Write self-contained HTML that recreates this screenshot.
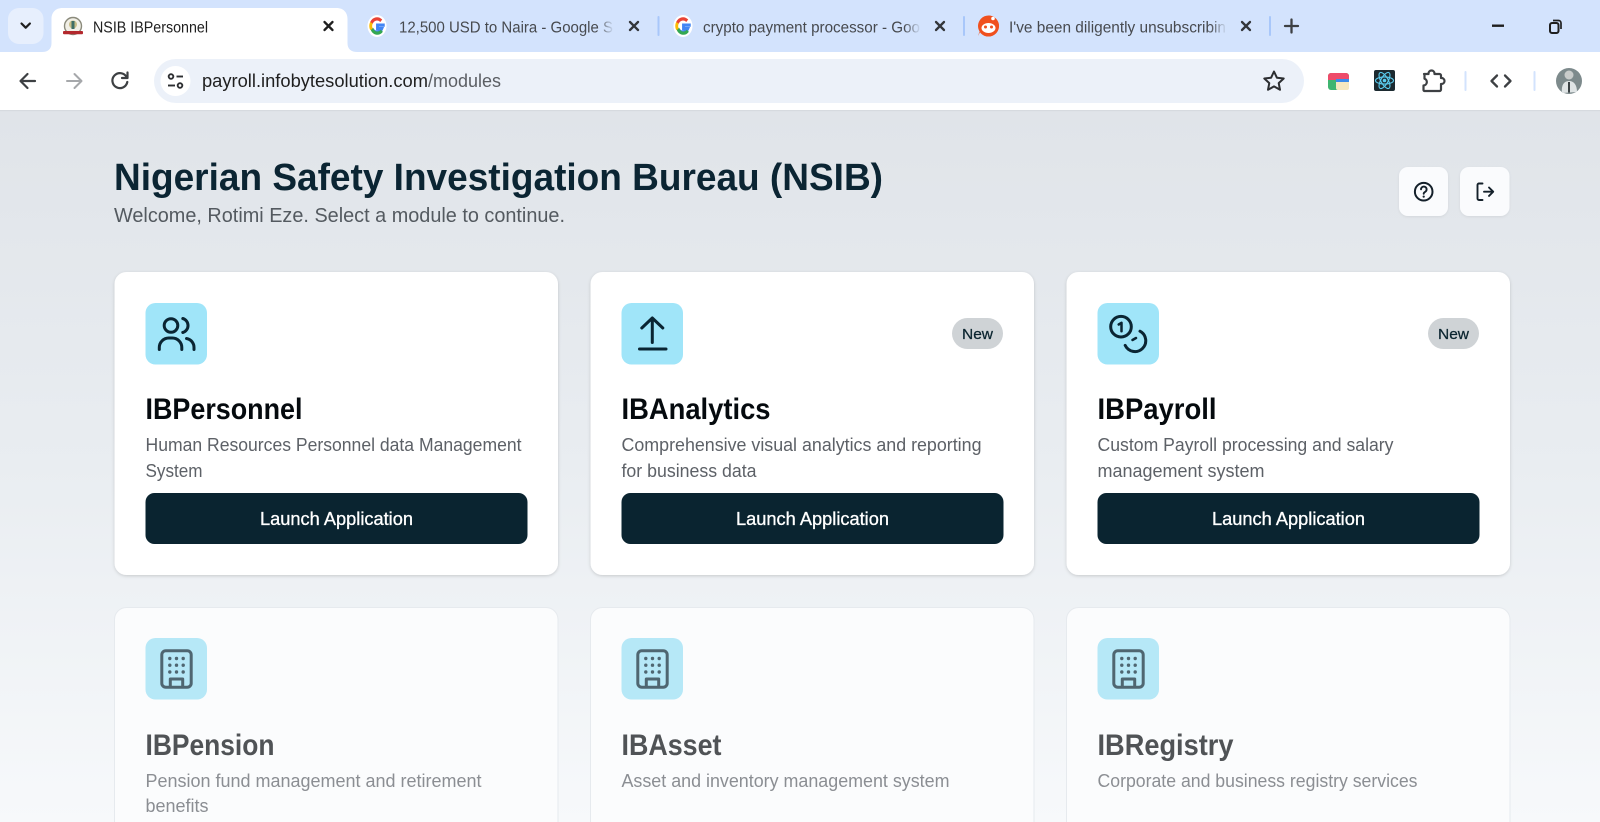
<!DOCTYPE html>
<html lang="en">
<head>
<meta charset="utf-8">
<title>NSIB IBPersonnel</title>
<style>
html,body{margin:0;padding:0;width:1600px;height:822px;overflow:hidden;background:#fff}
svg{display:block;overflow:hidden}
text{font-family:"Liberation Sans",sans-serif}
.tab{font-size:15.5px;fill:#474a4f}
.h3{font-size:30px;font-weight:700;fill:#050a0e}
.d{font-size:18px;fill:#5d6167}
.b{font-size:18px;fill:#fff;stroke:#fff;stroke-width:.3}
.h3o{font-size:30px;font-weight:700;fill:#505356}
.do{font-size:18px;fill:#8b8e93}
.new{font-size:14.5px;fill:#0b2530;stroke:#0b2530;stroke-width:.25}
.ic{fill:none;stroke:#0a2533;stroke-width:3;stroke-linecap:round;stroke-linejoin:round}
.bi{fill:none;stroke:#4f6671;stroke-width:3;stroke-linejoin:round}
.x{fill:none;stroke:#33363a;stroke-width:2.300;stroke-linecap:round}
</style>
</head>
<body>
<svg width="1600" height="822" viewBox="0 0 1600 822" xmlns="http://www.w3.org/2000/svg">
<defs>
<linearGradient id="bg" x1="0" y1="0" x2="0" y2="1"><stop offset="0" stop-color="#e0e4e9"/><stop offset=".5" stop-color="#e9edf1"/><stop offset="1" stop-color="#f7f9fb"/></linearGradient>
<linearGradient id="fade" x1="0" y1="0" x2="1" y2="0"><stop offset="0" stop-color="#d3e3fd" stop-opacity="0"/><stop offset="1" stop-color="#d3e3fd"/></linearGradient>
<filter id="sh" x="-5%" y="-5%" width="110%" height="112%"><feDropShadow dx="0" dy="1" stdDeviation="1.6" flood-color="#000" flood-opacity=".17"/></filter>
<filter id="sh2" x="-5%" y="-5%" width="110%" height="112%"><feDropShadow dx="0" dy="1" stdDeviation="1.2" flood-color="#000" flood-opacity=".07"/></filter>
<g id="G">
  <ellipse rx="9.500" ry="11" fill="#fff"/>
  <g transform="scale(1.250 1.450)">
  <path d="M6.200-.6H.4v2.400h3.400A4.300 4.300 0 0 1-3.900 1.900" fill="none" stroke="#4285f4" stroke-width="2.300"/>
  <path d="M-4.200 1.500A4.600 4.600 0 0 0 3.800 3.200" fill="none" stroke="#34a853" stroke-width="2.300"/>
  <path d="M-4.400 2.400A5 5 0 0 1-4.400-2.400" fill="none" stroke="#fbbc05" stroke-width="2.300"/>
  <path d="M-4.400-2.200A5 5 0 0 1 3.400-3.600" fill="none" stroke="#ea4335" stroke-width="2.300"/>
  </g>
</g>
<g id="bld">
  <rect x="161.800" y="650.800" width="29.400" height="36.400" rx="4" class="bi"/>
  <g fill="#4f6671"><circle cx="169.800" cy="658.500" r="1.700"/><circle cx="176.500" cy="658.500" r="1.700"/><circle cx="183.200" cy="658.500" r="1.700"/><circle cx="169.800" cy="665.200" r="1.700"/><circle cx="176.500" cy="665.200" r="1.700"/><circle cx="183.200" cy="665.200" r="1.700"/><circle cx="169.800" cy="672" r="1.700"/><circle cx="176.500" cy="672" r="1.700"/><circle cx="183.200" cy="672" r="1.700"/></g>
  <path d="M170.300 687V679H182.700V687" class="bi"/>
</g>
<g id="c2">
  <path d="M0 822V619.500a12 12 0 0 1 12-12H431.500a12 12 0 0 1 12 12V822z" fill="#fbfcfd"/>
  <path d="M0 822V619.500a12 12 0 0 1 12-12H431.500a12 12 0 0 1 12 12V822" fill="none" stroke="#e6eaee" stroke-width="1"/>
</g>
</defs>

<!-- page -->
<rect x="0" y="111" width="1600" height="711" fill="url(#bg)"/>

<!-- tab strip -->
<rect width="1600" height="52" fill="#d3e3fd"/>
<rect x="8" y="8" width="35.500" height="36" rx="11" fill="#e7effd"/>
<path d="M21.500 23.500l4.200 4.200 4.200-4.200" fill="none" stroke="#1f1f1f" stroke-width="2.200" stroke-linecap="round" stroke-linejoin="round"/>
<path d="M42 52c6 0 9.500-3 9.500-9V19c0-6.500 4-11 11-11h274c7 0 11 4.500 11 11v24c0 6 3.500 9 10 9z" fill="#fff"/>

<!-- NSIB favicon -->
<g>
  <circle cx="73" cy="26" r="8.500" fill="#f1efe6" stroke="#8b8b7c" stroke-width="1.400"/>
  <circle cx="73" cy="24.500" r="4" fill="#c9bd88"/>
  <rect x="71.500" y="21" width="3" height="8" fill="#3f6e66"/>
  <rect x="63" y="31" width="20" height="3.200" rx="1" fill="#b3282d"/>
</g>
<text x="93" y="32.500" class="tab" style="fill:#1f1f1f" textLength="115" lengthAdjust="spacingAndGlyphs">NSIB IBPersonnel</text>
<path d="M324.500 22l8 8m0-8l-8 8" class="x" style="stroke:#1f1f1f"/>

<use href="#G" x="377" y="26"/>
<text x="399" y="32.500" class="tab" textLength="214" lengthAdjust="spacingAndGlyphs">12,500 USD to Naira - Google S</text>
<rect x="598" y="14" width="16" height="26" fill="url(#fade)"/>
<path d="M630 22l8 8m0-8l-8 8" class="x"/>
<rect x="657.500" y="16" width="2" height="20" rx="1" fill="#a8c7fa"/>

<use href="#G" x="683" y="26"/>
<text x="703" y="32.500" class="tab" textLength="217" lengthAdjust="spacingAndGlyphs">crypto payment processor - Goo</text>
<rect x="904" y="14" width="17" height="26" fill="url(#fade)"/>
<path d="M936 22l8 8m0-8l-8 8" class="x"/>
<rect x="963" y="16" width="2" height="20" rx="1" fill="#a8c7fa"/>

<!-- reddit -->
<g>
  <path d="M988.500 15.500a10.500 10.500 0 1 1-9 16l-1.500 4.500z" fill="#f0501e"/>
  <circle cx="988.500" cy="26" r="10.500" fill="#f0501e"/>
  <ellipse cx="988.500" cy="28" rx="7" ry="5" fill="#fff"/>
  <circle cx="985.500" cy="27" r="1.500" fill="#f0501e"/><circle cx="991.500" cy="27" r="1.500" fill="#f0501e"/>
  <circle cx="993" cy="18.500" r="1.800" fill="#fff"/>
</g>
<text x="1009" y="32.500" class="tab" textLength="217" lengthAdjust="spacingAndGlyphs">I've been diligently unsubscribin</text>
<rect x="1210" y="14" width="17" height="26" fill="url(#fade)"/>
<path d="M1242 22l8 8m0-8l-8 8" class="x"/>
<rect x="1269" y="16" width="2" height="20" rx="1" fill="#a8c7fa"/>
<path d="M1291.500 19.500v13m-6.500-6.500h13" fill="none" stroke="#3d4043" stroke-width="2.300" stroke-linecap="round"/>
<rect x="1492" y="24.500" width="12" height="2.400" fill="#1f1f1f"/>
<rect x="1550" y="23" width="8.500" height="10" rx="2" fill="none" stroke="#1f1f1f" stroke-width="2"/>
<path d="M1553 20.500h5.500a2.500 2.500 0 0 1 2.500 2.500v6" fill="none" stroke="#1f1f1f" stroke-width="1.700"/>

<!-- toolbar -->
<rect x="0" y="52" width="1600" height="58.500" fill="#fff"/>
<rect x="0" y="110" width="1600" height="1.200" fill="#d6dadf"/>
<path d="M35 81H21m6.500-7l-7 7 7 7" fill="none" stroke="#3d4043" stroke-width="2.200" stroke-linecap="round" stroke-linejoin="round"/>
<path d="M67 81h14m-6.500-7l7 7-7 7" fill="none" stroke="#a6a8ab" stroke-width="2" stroke-linecap="round" stroke-linejoin="round"/>
<path d="M126.500 77a7.500 7.500 0 1 0 .8 5" fill="none" stroke="#3d4043" stroke-width="2.200" stroke-linecap="round"/>
<path d="M127.500 72.500v5.500h-5.500" fill="none" stroke="#3d4043" stroke-width="2.200" stroke-linecap="round" stroke-linejoin="round"/>
<rect x="154" y="59" width="1150" height="44" rx="22" fill="#ecf1f9"/>
<circle cx="175.500" cy="81" r="15" fill="#fff"/>
<g fill="none" stroke="#2c2e31" stroke-width="1.900"><circle cx="171" cy="76.500" r="2.300"/><path d="M176.500 76.500h6.500"/><circle cx="180" cy="85.500" r="2.300"/><path d="M168 85.500h7"/></g>
<text x="202" y="87" font-size="18" fill="#1f1f1f" textLength="226" lengthAdjust="spacingAndGlyphs">payroll.infobytesolution.com</text>
<text x="428" y="87" font-size="18" fill="#5b5e63" textLength="73" lengthAdjust="spacingAndGlyphs">/modules</text>
<path d="M1274 71.500l2.900 6.200 6.800.8-5 4.600 1.300 6.700-6-3.400-6 3.400 1.300-6.700-5-4.600 6.800-.8z" fill="none" stroke="#2c2e31" stroke-width="2" stroke-linejoin="round"/>

<!-- extension icons -->
<g>
  <rect x="1328" y="73" width="21" height="17" rx="3" fill="#3fb56f"/>
  <path d="M1328 80v-4a3 3 0 0 1 3-3h15a3 3 0 0 1 3 3v4z" fill="#ee4b6a"/>
  <rect x="1336" y="80" width="13" height="10" rx="2" fill="#f5e8c0"/>
  <rect x="1336" y="79" width="13" height="3" fill="#3b8bea"/>
</g>
<g>
  <rect x="1374" y="70" width="21" height="21" rx="2" fill="#1c2a30"/>
  <g fill="none" stroke="#5bcdf0" stroke-width="1.100"><ellipse cx="1384.500" cy="80.500" rx="9" ry="3.600"/><ellipse cx="1384.500" cy="80.500" rx="9" ry="3.600" transform="rotate(60 1384.500 80.500)"/><ellipse cx="1384.500" cy="80.500" rx="9" ry="3.600" transform="rotate(120 1384.500 80.500)"/></g>
  <circle cx="1384.500" cy="80.500" r="1.800" fill="#5bcdf0"/>
</g>
<path d="M1424 74h4.500v-.5a3 3 0 0 1 6 0v.5h5a1.500 1.500 0 0 1 1.500 1.500V78h.5a3 3 0 0 1 0 6h-.5v5.500a1.500 1.500 0 0 1-1.500 1.500h-15a1 1 0 0 1-1-1v-4.500a3.500 3.500 0 0 0 1-6.800V75a1 1 0 0 1 .5-1z" fill="none" stroke="#3d4043" stroke-width="2.200" stroke-linejoin="round"/>
<rect x="1464.500" y="71" width="2" height="20" rx="1" fill="#d3e3fd"/>
<path d="M1497 75.500l-5.500 5.500 5.500 5.500m8-11l5.500 5.500-5.500 5.500" fill="none" stroke="#3d4043" stroke-width="2.300" stroke-linecap="round" stroke-linejoin="round"/>
<rect x="1533.500" y="71" width="2" height="20" rx="1" fill="#d3e3fd"/>
<circle cx="1569" cy="81" r="13" fill="#7d8a8c"/>
<path d="M1562 93c-1-8 2-12 7-12s8 4 8 11z" fill="#dfe4e5"/>
<circle cx="1569" cy="75" r="4.500" fill="#c9cccb"/>
<rect x="1568" y="82" width="2" height="10.500" fill="#3a4144"/>

<!-- header -->
<text x="114" y="190" font-size="38" font-weight="700" fill="#0b2533" textLength="769" lengthAdjust="spacingAndGlyphs">Nigerian Safety Investigation Bureau (NSIB)</text>
<text x="114" y="222" font-size="20" fill="#545a60" textLength="451" lengthAdjust="spacingAndGlyphs">Welcome, Rotimi Eze. Select a module to continue.</text>

<rect x="1399" y="167" width="49" height="49" rx="9" fill="#fafbfd" filter="url(#sh2)"/>
<rect x="1460" y="167" width="49.500" height="49" rx="9" fill="#fafbfd" filter="url(#sh2)"/>
<circle cx="1423.700" cy="191.700" r="8.800" fill="none" stroke="#14202a" stroke-width="2"/>
<path d="M1421 189.300a2.800 2.800 0 1 1 4.200 2.500c-1 .6-1.500 1.100-1.500 2" fill="none" stroke="#14202a" stroke-width="1.900" stroke-linecap="round"/>
<circle cx="1423.700" cy="196.600" r="1.100" fill="#14202a"/>
<path d="M1482.500 183.500h-3.500a1.500 1.500 0 0 0-1.500 1.500v13.500a1.500 1.500 0 0 0 1.500 1.500h3.500M1484 191.700h9m-4-4.200l4.200 4.200-4.200 4.200" fill="none" stroke="#14202a" stroke-width="1.900" stroke-linecap="round" stroke-linejoin="round"/>

<!-- row 1 cards -->
<rect x="114.500" y="272" width="443.500" height="303" rx="12" fill="#fff" filter="url(#sh)"/>
<rect x="590.500" y="272" width="443.500" height="303" rx="12" fill="#fff" filter="url(#sh)"/>
<rect x="1066.500" y="272" width="443.500" height="303" rx="12" fill="#fff" filter="url(#sh)"/>

<rect x="145.500" y="303" width="61.500" height="61.500" rx="10" fill="#a0e5f9"/>
<rect x="621.500" y="303" width="61.500" height="61.500" rx="10" fill="#a0e5f9"/>
<rect x="1097.500" y="303" width="61.500" height="61.500" rx="10" fill="#a0e5f9"/>

<circle cx="171" cy="325.500" r="6.800" class="ic"/>
<path d="M182.800 318.500a7.300 7.300 0 0 1 0 14" class="ic"/>
<path d="M159.300 349.500v-2a9.500 9.500 0 0 1 9.500-9.500h3.500a9.500 9.500 0 0 1 9.500 9.500v2" class="ic"/>
<path d="M186.500 338.500a9 9 0 0 1 7.500 9v2" class="ic"/>

<path d="M652.300 342.500V318.500m-10.500 9.500l10.500-10 10.500 10M639.500 349h26.500" class="ic"/>

<circle cx="1121" cy="326.700" r="10.300" class="ic"/>
<path d="M1118.700 324.500l2.800-1.700v8.500" class="ic" style="stroke-width:2.500"/>
<path d="M1140 331.200a10.800 10.800 0 1 1-14.800 14.200" class="ic"/>
<path d="M1132.500 340l3.500-2" class="ic" style="stroke-width:2.500"/>

<rect x="952" y="318" width="51" height="31" rx="15.500" fill="#cfd3d6"/>
<text x="962" y="339" class="new" textLength="31" lengthAdjust="spacingAndGlyphs">New</text>
<rect x="1428" y="318" width="51" height="31" rx="15.500" fill="#cfd3d6"/>
<text x="1438" y="339" class="new" textLength="31" lengthAdjust="spacingAndGlyphs">New</text>

<text x="145.500" y="419" class="h3" textLength="157" lengthAdjust="spacingAndGlyphs">IBPersonnel</text>
<text x="145.500" y="451" class="d" textLength="376" lengthAdjust="spacingAndGlyphs">Human Resources Personnel data Management</text>
<text x="145.500" y="477" class="d" textLength="57" lengthAdjust="spacingAndGlyphs">System</text>

<text x="621.500" y="419" class="h3" textLength="149" lengthAdjust="spacingAndGlyphs">IBAnalytics</text>
<text x="621.500" y="451" class="d" textLength="360" lengthAdjust="spacingAndGlyphs">Comprehensive visual analytics and reporting</text>
<text x="621.500" y="477" class="d" textLength="135" lengthAdjust="spacingAndGlyphs">for business data</text>

<text x="1097.500" y="419" class="h3" textLength="119" lengthAdjust="spacingAndGlyphs">IBPayroll</text>
<text x="1097.500" y="451" class="d" textLength="296" lengthAdjust="spacingAndGlyphs">Custom Payroll processing and salary</text>
<text x="1097.500" y="477" class="d" textLength="167" lengthAdjust="spacingAndGlyphs">management system</text>

<rect x="145.500" y="493" width="382" height="51" rx="9" fill="#0a2430"/>
<rect x="621.500" y="493" width="382" height="51" rx="9" fill="#0a2430"/>
<rect x="1097.500" y="493" width="382" height="51" rx="9" fill="#0a2430"/>
<text x="260" y="525" class="b" textLength="153" lengthAdjust="spacingAndGlyphs">Launch Application</text>
<text x="736" y="525" class="b" textLength="153" lengthAdjust="spacingAndGlyphs">Launch Application</text>
<text x="1212" y="525" class="b" textLength="153" lengthAdjust="spacingAndGlyphs">Launch Application</text>

<!-- row 2 cards -->
<use href="#c2" x="114.500"/>
<use href="#c2" x="590.500"/>
<use href="#c2" x="1066.500"/>

<rect x="145.500" y="638" width="61.500" height="61.500" rx="10" fill="#b6e8f7"/>
<rect x="621.500" y="638" width="61.500" height="61.500" rx="10" fill="#b6e8f7"/>
<rect x="1097.500" y="638" width="61.500" height="61.500" rx="10" fill="#b6e8f7"/>
<use href="#bld"/>
<use href="#bld" x="476"/>
<use href="#bld" x="952"/>

<text x="145.500" y="755" class="h3o" textLength="129" lengthAdjust="spacingAndGlyphs">IBPension</text>
<text x="145.500" y="787" class="do" textLength="336" lengthAdjust="spacingAndGlyphs">Pension fund management and retirement</text>
<text x="145.500" y="812" class="do" textLength="63" lengthAdjust="spacingAndGlyphs">benefits</text>

<text x="621.500" y="755" class="h3o" textLength="100" lengthAdjust="spacingAndGlyphs">IBAsset</text>
<text x="621.500" y="787" class="do" textLength="328" lengthAdjust="spacingAndGlyphs">Asset and inventory management system</text>

<text x="1097.500" y="755" class="h3o" textLength="136" lengthAdjust="spacingAndGlyphs">IBRegistry</text>
<text x="1097.500" y="787" class="do" textLength="320" lengthAdjust="spacingAndGlyphs">Corporate and business registry services</text>
</svg>
</body>
</html>
